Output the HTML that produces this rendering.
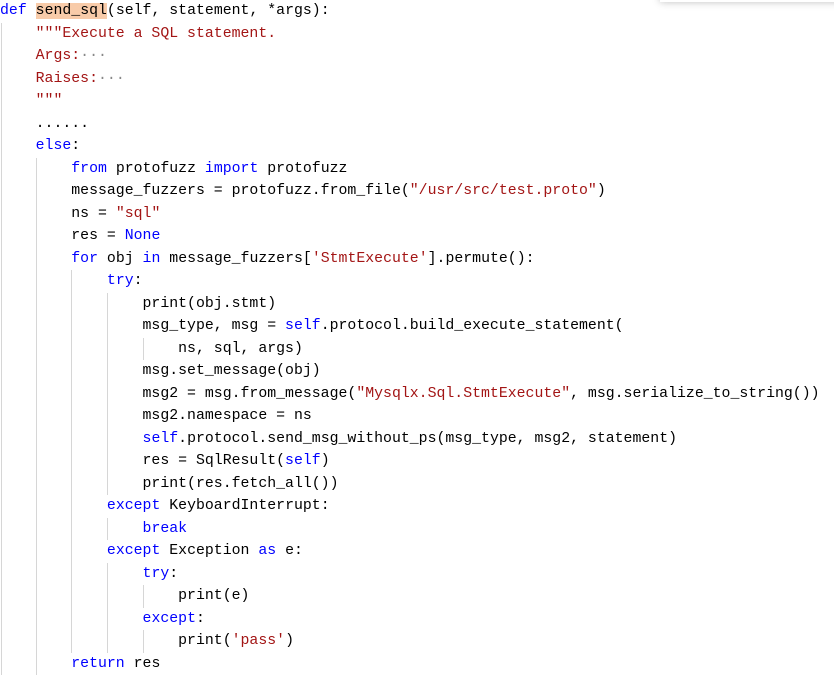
<!DOCTYPE html>
<html><head><meta charset="utf-8"><style>
html,body{margin:0;padding:0;background:#fff;width:834px;height:678px;overflow:hidden}
#c{position:absolute;left:0;top:0px;font-family:"Liberation Mono",monospace;font-size:14.85px;color:#000}
.l{position:relative;height:22.5px;line-height:22.5px;white-space:pre}
.g{position:absolute;top:0;width:1px;height:22.5px;background:#d6d6d6}
.k{color:#0000ff}.s{color:#a31515}
.h{background:#f8cba9}
#sh{position:absolute;left:660px;top:-10px;width:200px;height:12px;background:#fff;box-shadow:0 0 8px rgba(0,0,0,.25)}
</style></head><body>
<div id="c">
<div class="l"><span class="k">def</span> <span class="h">send_sql</span>(self, statement, *args):</div>
<div class="l" data-x="1"><span class="s">    """Execute a SQL statement.</span></div>
<div class="l" data-x="1"><span class="s">    Args:</span><span style="color:#888">···</span></div>
<div class="l" data-x="1"><span class="s">    Raises:</span><span style="color:#888">···</span></div>
<div class="l" data-x="1"><span class="s">    """</span></div>
<div class="l" data-x="1">    ......</div>
<div class="l" data-x="1">    <span class="k">else</span>:</div>
<div class="l" data-x="2">        <span class="k">from</span> protofuzz <span class="k">import</span> protofuzz</div>
<div class="l" data-x="2">        message_fuzzers = protofuzz.from_file(<span class="s">"/usr/src/test.proto"</span>)</div>
<div class="l" data-x="2">        ns = <span class="s">"sql"</span></div>
<div class="l" data-x="2">        res = <span class="k">None</span></div>
<div class="l" data-x="2">        <span class="k">for</span> obj <span class="k">in</span> message_fuzzers[<span class="s">'StmtExecute'</span>].permute():</div>
<div class="l" data-x="3">            <span class="k">try</span>:</div>
<div class="l" data-x="4">                print(obj.stmt)</div>
<div class="l" data-x="4">                msg_type, msg = <span class="k">self</span>.protocol.build_execute_statement(</div>
<div class="l" data-x="5">                    ns, sql, args)</div>
<div class="l" data-x="4">                msg.set_message(obj)</div>
<div class="l" data-x="4">                msg2 = msg.from_message(<span class="s">"Mysqlx.Sql.StmtExecute"</span>, msg.serialize_to_string())</div>
<div class="l" data-x="4">                msg2.namespace = ns</div>
<div class="l" data-x="4">                <span class="k">self</span>.protocol.send_msg_without_ps(msg_type, msg2, statement)</div>
<div class="l" data-x="4">                res = SqlResult(<span class="k">self</span>)</div>
<div class="l" data-x="4">                print(res.fetch_all())</div>
<div class="l" data-x="3">            <span class="k">except</span> KeyboardInterrupt:</div>
<div class="l" data-x="4">                <span class="k">break</span></div>
<div class="l" data-x="3">            <span class="k">except</span> Exception <span class="k">as</span> e:</div>
<div class="l" data-x="4">                <span class="k">try</span>:</div>
<div class="l" data-x="5">                    print(e)</div>
<div class="l" data-x="4">                <span class="k">except</span>:</div>
<div class="l" data-x="5">                    print(<span class="s">'pass'</span>)</div>
<div class="l" data-x="2">        <span class="k">return</span> res</div>
</div>
<div id="sh"></div>
<script>
document.querySelectorAll('.l').forEach(function(l){
  var n=parseInt(l.getAttribute('data-x')||'0');
  for(var k=0;k<n;k++){var d=document.createElement('div');d.className='g';d.style.left=(k===0?1:Math.round(35.64*k))+'px';l.appendChild(d);}
});
</script>
</body></html>
